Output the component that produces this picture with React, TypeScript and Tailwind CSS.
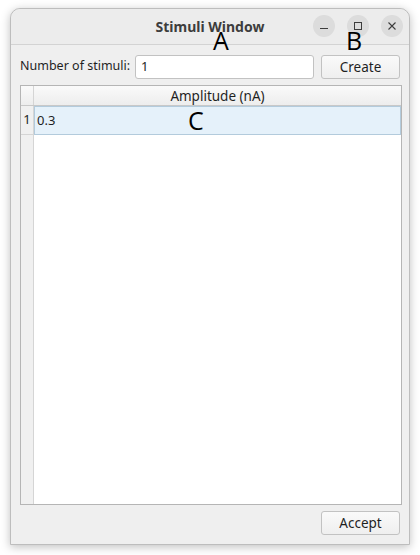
import React from 'react';

// Stimuli window dialog mock
function TitleButton({ children }: { children: React.ReactNode }) {
  return (
    <div className="flex h-[22px] w-[22px] items-center justify-center rounded-full bg-[#dcdcdc] text-[#3c3c3c]">
      {children}
    </div>
  );
}

function Button({ label }: { label: string }) {
  return (
    <button className="h-[24px] w-[79px] rounded-[3px] border border-[#c2c2c2] bg-gradient-to-b from-[#fafafa] to-[#efefef] text-[13.5px] text-[#1f1f1f]">
      {label}
    </button>
  );
}

export default function App() {
  const font = { fontFamily: '"Noto Sans", "Open Sans", sans-serif' };

  return (
    <div className="relative h-[555px] w-[420px] bg-white pl-[10px] pt-[8px]" style={font}>
      <div className="flex h-[537px] w-[400px] flex-col rounded-t-[10px] border border-[#bdbdbd] bg-[#efefef] shadow-[0_2px_10px_rgba(0,0,0,0.25)]">
        {/* Title bar */}
        <div className="relative flex h-[36px] items-center justify-center rounded-t-[10px] border-b border-[#d3d3d3] bg-[#ececec]">
          <span className="text-[14px] font-bold text-[#3d3d3d]">Stimuli Window</span>
          <div className="absolute right-[6px] top-[6px] flex gap-[12px]">
            <TitleButton>
              <svg width="10" height="10" viewBox="0 0 10 10">
                <path d="M1 7.5h8" stroke="currentColor" strokeWidth="1" />
              </svg>
            </TitleButton>
            <TitleButton>
              <svg width="10" height="10" viewBox="0 0 10 10">
                <rect x="1.5" y="1.5" width="7" height="7" fill="none" stroke="currentColor" strokeWidth="1" />
              </svg>
            </TitleButton>
            <TitleButton>
              <svg width="10" height="10" viewBox="0 0 10 10">
                <path d="M1.5 1.5l7 7M8.5 1.5l-7 7" stroke="currentColor" strokeWidth="1.1" />
              </svg>
            </TitleButton>
          </div>
        </div>

        {/* Content */}
        <div className="flex flex-1 flex-col px-[9px] pb-[9px] pt-[9px]">
          <div className="flex items-center">
            <span className="text-[12.5px] text-[#1f1f1f]">Number of stimuli:</span>
            <div className="ml-auto flex h-[24px] w-[179px] items-center rounded-[3px] border border-[#c2c2c2] bg-white px-[5px] text-[13px] text-[#1f1f1f]">
              1
            </div>
            <div className="ml-[7px]">
              <Button label="Create" />
            </div>
          </div>

          {/* Table */}
          <div className="mt-[6px] flex h-[420px] w-[382px] flex-col border border-[#b5b5b5] bg-white">
            <div className="flex h-[20px] border-b border-[#c8c8c8] bg-gradient-to-b from-[#fafafa] to-[#ededed]">
              <div className="w-[13px] border-r border-[#d5d5d5]" />
              <div className="flex flex-1 items-center justify-center text-[13.5px] text-[#1f1f1f]">Amplitude (nA)</div>
            </div>
            <div className="flex flex-1">
              <div className="flex w-[13px] flex-col border-r border-[#d5d5d5] bg-[#f0f0f0]">
                <div className="flex h-[29px] items-center justify-center border-b border-[#d5d5d5] text-[13px] text-[#1f1f1f]">1</div>
              </div>
              <div className="flex flex-1 flex-col">
                <div className="flex h-[29px] items-center border border-[#b3cbdc] bg-[#e5f1fa] pl-[2px] text-[13px] text-[#1f1f1f]">
                  0.3
                </div>
              </div>
            </div>
          </div>

          <div className="mt-auto flex justify-end">
            <Button label="Accept" />
          </div>
        </div>
      </div>

      {/* Annotation letters */}
      <span className="absolute left-[213px] top-[28px] text-[25px] leading-none text-black" style={{ fontFamily: '"Open Sans", sans-serif' }}>A</span>
      <span className="absolute left-[346px] top-[28px] text-[25px] leading-none text-black" style={{ fontFamily: '"Open Sans", sans-serif' }}>B</span>
      <span className="absolute left-[188px] top-[108px] text-[25px] leading-none text-black" style={{ fontFamily: '"Open Sans", sans-serif' }}>C</span>
    </div>
  );
}
